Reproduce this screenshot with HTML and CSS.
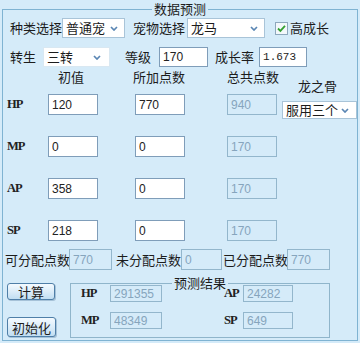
FILE: index.html
```html
<!DOCTYPE html>
<html>
  <head>
    <meta charset="utf-8" />
    <title>数据预测</title>
    <link rel="stylesheet" href="styles.css">
  </head>
  <body>
    <fieldset class="panel">
      <legend>数据预测</legend>

      <div class="row row-top">
        <label class="lbl">种类选择</label>
        <div class="select sel-kind">
          <span>普通宠</span>
          <svg viewBox="0 0 8 5"><path d="M1 1l3 3 3-3" /></svg>
        </div>
        <label class="lbl lbl-pet">宠物选择</label>
        <div class="select sel-pet">
          <span>龙马</span>
          <svg viewBox="0 0 8 5"><path d="M1 1l3 3 3-3" /></svg>
        </div>
        <span class="check">
          <svg viewBox="0 0 13 13" width="13" height="13">
            <rect x="0.5" y="0.5" width="12" height="12" fill="#f3f8fb" stroke="#8ea8bd" />
            <path d="M3 6.5l2.4 2.4 4.6-5" fill="none" stroke="#35a032" stroke-width="1.8" />
          </svg>
        </span>
        <label class="lbl lbl-check">高成长</label>
      </div>

      <div class="row row-second">
        <label class="lbl">转生</label>
        <div class="select sel-rebirth">
          <span>三转</span>
          <svg viewBox="0 0 8 5"><path d="M1 1l3 3 3-3" /></svg>
        </div>
        <label class="lbl lbl-level">等级</label>
        <input class="num in-level" value="170" />
        <label class="lbl lbl-growth">成长率</label>
        <input class="num mono in-growth" value="1.673" />
      </div>

      <div class="stats-head">
        <span></span>
        <span class="head head-base">初值</span>
        <span class="head head-add">所加点数</span>
        <span class="head">总共点数</span>
        <span class="head head-bone">龙之骨</span>
      </div>

      <div class="stats">
        <span class="stat">HP</span>
        <input class="num" value="120" />
        <input class="num" value="770" />
        <input class="num" value="940" disabled />
        <div class="select sel-bone">
          <span>服用三个</span>
          <svg viewBox="0 0 8 5"><path d="M1 1l3 3 3-3" /></svg>
        </div>

        <span class="stat">MP</span>
        <input class="num" value="0" />
        <input class="num" value="0" />
        <input class="num" value="170" disabled />
        <span></span>

        <span class="stat">AP</span>
        <input class="num" value="358" />
        <input class="num" value="0" />
        <input class="num" value="170" disabled />
        <span></span>

        <span class="stat">SP</span>
        <input class="num" value="218" />
        <input class="num" value="0" />
        <input class="num" value="170" disabled />
        <span></span>
      </div>

      <div class="row row-points">
        <label class="lbl lbl-points">可分配点数</label>
        <input class="num in-points" value="770" disabled />
        <label class="lbl lbl-points">未分配点数</label>
        <input class="num in-left" value="0" disabled />
        <label class="lbl lbl-points">已分配点数</label>
        <input class="num in-points" value="770" disabled />
      </div>

      <div class="bottom">
        <div class="buttons">
          <button class="btn btn-calc">计算</button>
          <button class="btn btn-reset">初始化</button>
        </div>
        <fieldset class="result">
          <legend>预测结果</legend>
          <div class="result-grid">
            <span class="stat stat-res">HP</span>
            <input class="num res" value="291355" disabled />
            <span></span>
            <span class="stat">AP</span>
            <input class="num res res-right" value="24282" disabled />

            <span class="stat stat-res">MP</span>
            <input class="num res" value="48349" disabled />
            <span></span>
            <span class="stat">SP</span>
            <input class="num res res-right" value="649" disabled />
          </div>
        </fieldset>
      </div>
    </fieldset>
  </body>
</html>
```

FILE: styles.css
```css
body {
  margin: 0;
  width: 360px;
  height: 343px;
  overflow: hidden;
  background-color: #d5ebf9;
  font-family: "Noto Sans CJK SC", sans-serif;
  font-size: 13px;
  color: #1c1c1c;
}
.panel {
  margin: 1px 2px 0 2px;
  padding: 0 0 2px 0;
  border: 1px solid #7fb3d2;
  min-width: 0;
}
.panel > legend {
  margin: 0 auto;
  padding: 0 2px;
  line-height: 16px;
}
.row {
  display: flex;
  align-items: center;
  height: 20px;
}
.lbl {
  white-space: nowrap;
  line-height: 16px;
}
.row-top {
  margin-top: 1px;
  padding-left: 7px;
}
.row-top .lbl {
  width: 52px;
}
.lbl-pet {
  margin-left: 8px;
}
.row-top .lbl-check {
  margin-left: 2px;
  width: auto;
}
.check {
  display: flex;
  margin-left: 10px;
}
.select {
  box-sizing: border-box;
  display: flex;
  align-items: center;
  justify-content: space-between;
  height: 20px;
  padding: 0 6px 0 3px;
  background-color: #fff;
  border: 1px solid #a9c4d8;
}
.select span {
  white-space: nowrap;
  line-height: 16px;
}
.select svg {
  flex: none;
  width: 8px;
  height: 5px;
}
.select svg path {
  fill: none;
  stroke: #5a86b4;
  stroke-width: 1.7;
}
.sel-kind {
  width: 63px;
}
.sel-pet {
  width: 78px;
  margin-left: 2px;
}
.row-second {
  margin-top: 9px;
  padding-left: 7px;
}
.sel-rebirth {
  width: 67px;
  margin-left: 7px;
  border-color: #d9e8f2;
  padding-right: 8px;
}
.lbl-level {
  margin-left: 15px;
}
.in-level {
  width: 49px;
  margin-left: 8px;
}
.lbl-growth {
  margin-left: 7px;
}
.in-growth {
  width: 48px;
  margin-left: 5px;
}
.num {
  box-sizing: border-box;
  height: 21px;
  padding: 0 3px;
  border: 1px solid #7f9db9;
  background-color: #fff;
  color: #222;
  font-family: "Liberation Sans", sans-serif;
  font-size: 12px;
  outline: none;
}
.row .num {
  height: 20px;
}
.mono {
  font-family: "Liberation Mono", monospace;
  font-size: 11px;
}
.num:disabled {
  background-color: #d5ebf9;
  border-color: #93b6cc;
  color: #86a5bd;
}
.stats-head,
.stats {
  display: grid;
  grid-template-columns: 45px 87px 92px 55px 75px;
}
.stats-head {
  margin-top: 1px;
  height: 26px;
}
.head {
  padding-top: 1px;
  line-height: 16px;
  white-space: nowrap;
}
.head-base {
  padding-left: 10px;
}
.head-add {
  margin-left: -2px;
}
.head-bone {
  padding-top: 10px;
  padding-left: 16px;
}
.stats {
  grid-template-rows: repeat(4, 21px);
  row-gap: 21px;
  align-items: center;
}
.stats .num {
  width: 50px;
}
.stat {
  padding-left: 4px;
  font-family: "Liberation Serif", serif;
  font-weight: bold;
  font-size: 12.5px;
  letter-spacing: -1px;
  color: #222;
}
.sel-bone {
  align-self: start;
  width: 75px;
  height: 18px;
  margin-top: 7px;
  padding-right: 7px;
}
.row-points {
  margin-top: 8px;
  height: 21px;
  padding-left: 2px;
}
.lbl-points {
  width: 64px;
}
.row-points .num {
  height: 21px;
}
.in-points {
  width: 43px;
  margin-right: 4px;
}
.in-left {
  width: 41px;
  margin-left: 1px;
  margin-right: 1px;
}
.bottom {
  display: flex;
  margin-top: 6px;
}
.buttons {
  display: flex;
  flex-direction: column;
  margin-left: 4px;
  width: 50px;
}
.btn {
  box-sizing: border-box;
  padding: 0;
  border: 1px solid #4f7fa8;
  border-radius: 3px;
  background-image: linear-gradient(#f4faff 0%, #dcedf9 50%, #c1def2 100%);
  box-shadow: 1px 1px 0 rgba(60, 100, 140, 0.3);
  font-family: "Noto Sans CJK SC", sans-serif;
  font-size: 13px;
  line-height: 15px;
  color: #1c1c1c;
}
.btn-calc {
  width: 48px;
  height: 17px;
  margin-top: 7px;
}
.btn-reset {
  width: 49px;
  height: 20px;
  margin-top: 17px;
}
.result {
  box-sizing: border-box;
  width: 260px;
  margin: 0 0 0 13px;
  padding: 0 0 8px 0;
  border: 1px solid #8fb5cb;
  min-width: 0;
}
.result > legend {
  margin: 0 auto;
  padding: 0 2px;
  line-height: 14px;
}
.result-grid {
  display: grid;
  grid-template-columns: 39px 52px 58px 23px 50px;
  grid-template-rows: 17px 17px;
  row-gap: 10px;
  align-items: center;
  margin-top: -5px;
}
.stat-res {
  padding-left: 10px;
}
.res {
  height: 17px;
  width: 52px;
}
.res-right {
  width: 50px;
}
```
